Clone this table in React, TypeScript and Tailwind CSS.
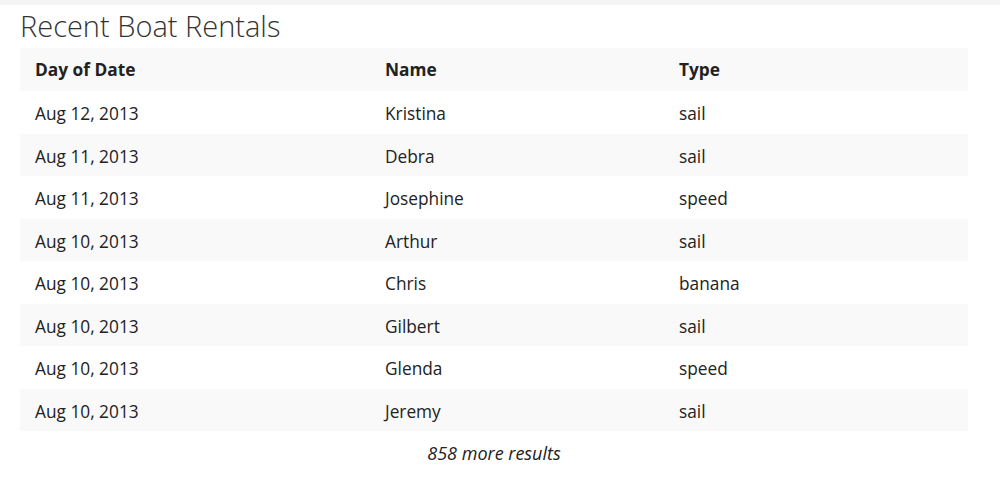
import React from "react";

const rows = [
  ["Aug 12, 2013", "Kristina", "sail"],
  ["Aug 11, 2013", "Debra", "sail"],
  ["Aug 11, 2013", "Josephine", "speed"],
  ["Aug 10, 2013", "Arthur", "sail"],
  ["Aug 10, 2013", "Chris", "banana"],
  ["Aug 10, 2013", "Gilbert", "sail"],
  ["Aug 10, 2013", "Glenda", "speed"],
  ["Aug 10, 2013", "Jeremy", "sail"],
];

export default function App() {
  return (
    <div
      className="w-[1000px] h-[486px] bg-white text-[#222]"
      style={{ fontFamily: '"Open Sans", "Liberation Sans", sans-serif' }}
    >
      <div className="h-[5px] bg-[#f4f4f4]" />
      <div className="px-5">
        <h1 className="text-[29px] font-light leading-[38px] mt-[2px] text-[#333]">
          Recent Boat Rentals
        </h1>
        <table className="w-[948px] table-fixed mt-[3px] text-[17.3px] border-collapse">
          <thead>
            <tr className="bg-[#f9f9f9] h-[43px]">
              <th className="w-[350px] pl-[15px] text-left font-bold">Day of Date</th>
              <th className="w-[294px] pl-[15px] text-left font-bold">Name</th>
              <th className="pl-[15px] text-left font-bold">Type</th>
            </tr>
          </thead>
          <tbody>
            {rows.map((r, i) => (
              <tr key={i} className={i % 2 === 1 ? "bg-[#f9f9f9] h-[42.5px]" : "h-[42.5px]"}>
                <td className="pl-[15px] pt-[4px]">{r[0]}</td>
                <td className="pl-[15px] pt-[4px]">{r[1]}</td>
                <td className="pl-[15px] pt-[4px]">{r[2]}</td>
              </tr>
            ))}
          </tbody>
        </table>
        <div className="w-[948px] text-center italic text-[18px] mt-[9px]">858 more results</div>
      </div>
    </div>
  );
}
